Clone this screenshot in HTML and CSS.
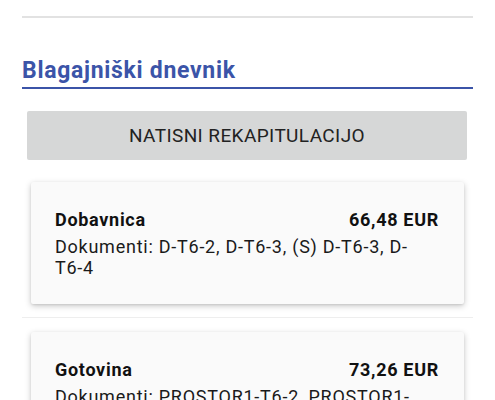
FILE: index.html
```html
<!DOCTYPE html>
<html lang="sl">
<head>
<meta charset="utf-8">
<link rel="stylesheet" href="styles.css">
</head>
<body>
<div class="page">
  <div class="rule-top"></div>
  <h2 class="section-title">Blagajniški dnevnik</h2>
  <button class="btn">NATISNI REKAPITULACIJO</button>
  <div class="card">
    <div class="card-head"><span>Dobavnica</span><span>66,48 EUR</span></div>
    <div class="card-docs">Dokumenti: D-T6-2, D-T6-3, (S) D-T6-3, D-T6-4</div>
  </div>
  <div class="sep"></div>
  <div class="card">
    <div class="card-head"><span>Gotovina</span><span>73,26 EUR</span></div>
    <div class="card-docs">Dokumenti: PROSTOR1-T6-2, PROSTOR1-T6-3, PROSTOR1-T6-4</div>
  </div>
</div>
</body>
</html>
```
FILE: styles.css
```css
html, body {
  margin: 0;
  padding: 0;
  background: #ffffff;
  font-family: Roboto, "Liberation Sans", sans-serif;
  color: #1a1a1a;
}
.page {
  padding: 0 22px;
  overflow: hidden;
  height: 400px;
}
.rule-top {
  margin-top: 16px;
  height: 2px;
  background: #e2e2e2;
}
.section-title {
  margin: 40px 0 0 0;
  font-size: 23px;
  font-weight: 700;
  letter-spacing: 0.7px;
  line-height: 26px;
  color: #3b54a8;
  padding-bottom: 3px;
  border-bottom: 2px solid #3b54a8;
}
.btn {
  display: block;
  box-sizing: border-box;
  margin: 22px 6px 0 5px;
  width: calc(100% - 11px);
  height: 49px;
  border: none;
  border-radius: 2px;
  background: #d6d7d7;
  font-family: Roboto, "Liberation Sans", sans-serif;
  font-size: 19px;
  letter-spacing: 0.4px;
  color: #222222;
  padding: 0;
}
.card {
  margin: 22px 9px 0 9px;
  background: #fafafa;
  border-radius: 2px;
  box-shadow: 0 2px 6px rgba(0, 0, 0, 0.22), 0 1px 2px rgba(0, 0, 0, 0.08);
  padding: 28px 25px 26px 24px;
}
.card-head {
  display: flex;
  justify-content: space-between;
  font-size: 18px;
  font-weight: 700;
  letter-spacing: 0.7px;
  line-height: 20px;
  color: #111111;
}
.card-docs {
  margin-top: 6px;
  padding-right: 10px;
  font-size: 18px;
  letter-spacing: 0.75px;
  line-height: 21px;
  color: #1a1a1a;
}
.sep {
  margin-top: 13px;
  height: 1px;
  background: #eeeeee;
}
.sep + .card {
  margin-top: 14px;
}
```
